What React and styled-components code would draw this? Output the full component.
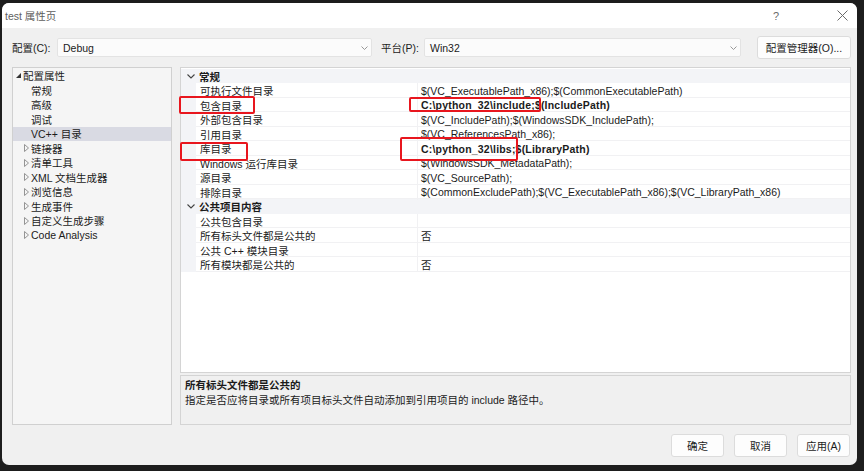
import styled, { createGlobalStyle } from 'styled-components'

const treeItems = [
	{ label: '配置属性', level: 0, twisty: 'open' },
	{ label: '常规', level: 1 },
	{ label: '高级', level: 1 },
	{ label: '调试', level: 1 },
	{ label: 'VC++ 目录', level: 1, selected: true },
	{ label: '链接器', level: 1, twisty: 'closed' },
	{ label: '清单工具', level: 1, twisty: 'closed' },
	{ label: 'XML 文档生成器', level: 1, twisty: 'closed' },
	{ label: '浏览信息', level: 1, twisty: 'closed' },
	{ label: '生成事件', level: 1, twisty: 'closed' },
	{ label: '自定义生成步骤', level: 1, twisty: 'closed' },
	{ label: 'Code Analysis', level: 1, twisty: 'closed' },
]

const sections = [
	{
		title: '常规',
		rows: [
			['可执行文件目录', '$(VC_ExecutablePath_x86);$(CommonExecutablePath)'],
			['包含目录', 'C:\\python_32\\include;$(IncludePath)', true],
			['外部包含目录', '$(VC_IncludePath);$(WindowsSDK_IncludePath);'],
			['引用目录', '$(VC_ReferencesPath_x86);'],
			['库目录', 'C:\\python_32\\libs;$(LibraryPath)', true],
			['Windows 运行库目录', '$(WindowsSDK_MetadataPath);'],
			['源目录', '$(VC_SourcePath);'],
			['排除目录', '$(CommonExcludePath);$(VC_ExecutablePath_x86);$(VC_LibraryPath_x86)'],
		],
	},
	{
		title: '公共项目内容',
		rows: [
			['公共包含目录', ''],
			['所有标头文件都是公共的', '否'],
			['公共 C++ 模块目录', ''],
			['所有模块都是公共的', '否'],
		],
	},
]

// highlight marks drawn over the grid (relative to the grid frame)
const marks = [
	{ left: -2, top: 28, width: 76, height: 18 },
	{ left: 228, top: 29, width: 132, height: 15 },
	{ left: -1, top: 74, width: 68, height: 19 },
	{ left: 219, top: 69, width: 118, height: 24 },
]

const App = () => {
	return (
		<>
			<GlobalStyle />
			<Screen>
				<Dialog>
					<TitleBar>
						<Title>test 属性页</Title>
						<TitleButtons>
							<HelpGlyph>?</HelpGlyph>
							<svg width='11' height='11' viewBox='0 0 11 11'>
								<path d='M0.5 0.5 L10.5 10.5 M10.5 0.5 L0.5 10.5' stroke='#6a6a6a' strokeWidth='1' />
							</svg>
						</TitleButtons>
					</TitleBar>
					<Body>
						<TopRow>
							<FieldLabel $w={45}>配置(C):</FieldLabel>
							<Combo $w={315}>
								Debug
								<Chevron />
							</Combo>
							<FieldLabel $w={43} $ml={9}>平台(P):</FieldLabel>
							<Combo $w={317}>
								Win32
								<Chevron />
							</Combo>
							<PushButton $w={94} $ml='auto'>配置管理器(O)...</PushButton>
						</TopRow>
						<Main>
							<TreePanel>
								{treeItems.map(item => (
									<TreeRow key={item.label} $level={item.level} $selected={item.selected}>
										<Twisty>
											{item.twisty === 'open' && (
												<svg width='5' height='5' viewBox='0 0 5 5'>
													<path d='M5 0 L5 5 L0 5 Z' fill='#333' />
												</svg>
											)}
											{item.twisty === 'closed' && (
												<svg width='5' height='8' viewBox='0 0 5 8'>
													<path d='M0.5 0.5 L4.5 4 L0.5 7.5 Z' fill='none' stroke='#8a8a8a' strokeWidth='0.9' />
												</svg>
											)}
										</Twisty>
										{item.label}
									</TreeRow>
								))}
							</TreePanel>
							<RightColumn>
								<GridFrame>
									{sections.map(section => (
										<div key={section.title}>
											<HeaderRow>
												<Gutter>
													<svg width='8' height='5' viewBox='0 0 8 5'>
														<path d='M0.5 0.5 L4 4 L7.5 0.5' fill='none' stroke='#444' strokeWidth='1.1' />
													</svg>
												</Gutter>
												<HeaderText>{section.title}</HeaderText>
											</HeaderRow>
											{section.rows.map(([name, value, bold]) => (
												<PropRow key={name}>
													<Gutter />
													<PropName>{name}</PropName>
													<PropValue $bold={bold}>{value}</PropValue>
												</PropRow>
											))}
										</div>
									))}
									{marks.map((m, i) => (
										<Mark
											key={i}
											style={{ left: m.left, top: m.top, width: m.width, height: m.height }}
										/>
									))}
								</GridFrame>
								<DescBox>
									<DescTitle>所有标头文件都是公共的</DescTitle>
									<div>指定是否应将目录或所有项目标头文件自动添加到引用项目的 include 路径中。</div>
								</DescBox>
							</RightColumn>
						</Main>
						<Footer>
							<PushButton $w={53}>确定</PushButton>
							<PushButton $w={53}>取消</PushButton>
							<PushButton $w={53}>应用(A)</PushButton>
						</Footer>
					</Body>
				</Dialog>
			</Screen>
		</>
	)
}

const Chevron = () => (
	<ChevronBox>
		<svg width='7' height='4' viewBox='0 0 7 4'>
			<path d='M0.5 0.5 L3.5 3.5 L6.5 0.5' fill='none' stroke='#8c8c8c' strokeWidth='0.9' />
		</svg>
	</ChevronBox>
)

const GlobalStyle = createGlobalStyle`
	html, body {
		margin: 0;
		padding: 0;
		background: #1d1d1d;
	}
	body {
		font-family: "Liberation Sans", "Noto Sans CJK SC", sans-serif;
		font-size: 10.5px;
		color: #1b1b1b;
	}
`

const Screen = styled.div`
	width: 864px;
	height: 471px;
	box-sizing: border-box;
	padding: 3px 7px 6px 2px;
	background: #1d1d1d;
`

const Dialog = styled.div`
	height: 100%;
	display: flex;
	flex-direction: column;
	background: #f0f0f0;
	border-radius: 7px;
	overflow: hidden;
`

const TitleBar = styled.div`
	height: 25px;
	flex-shrink: 0;
	display: flex;
	align-items: center;
	justify-content: space-between;
	background: #ffffff;
	padding: 0 9px 0 3px;
`

const Title = styled.span`
	color: #5e5e5e;
	font-size: 10.5px;
`

const TitleButtons = styled.div`
	display: flex;
	align-items: center;
	gap: 58px;
`

const HelpGlyph = styled.span`
	color: #6a6a6a;
	font-size: 11px;
`

const Body = styled.div`
	flex: 1;
	display: flex;
	flex-direction: column;
	padding: 0 6px 0 10px;
`

const TopRow = styled.div`
	display: flex;
	align-items: center;
	height: 23px;
	margin-top: 8px;
`

const FieldLabel = styled.span`
	width: ${props => props.$w}px;
	margin-left: ${props => props.$ml || 0}px;
	flex-shrink: 0;
`

const Combo = styled.div`
	width: ${props => props.$w}px;
	height: 19px;
	box-sizing: border-box;
	display: flex;
	align-items: center;
	padding-left: 5px;
	background: #fbfbfb;
	border: 1px solid #e3e3e3;
	border-radius: 2px;
`

const ChevronBox = styled.span`
	margin-left: auto;
	margin-right: 3px;
	display: flex;
	align-items: center;
`

const PushButton = styled.div`
	width: ${props => props.$w}px;
	height: 23px;
	margin-left: ${props => props.$ml || 0};
	box-sizing: border-box;
	display: flex;
	align-items: center;
	justify-content: center;
	background: #fdfdfd;
	border: 1px solid #dcdcdc;
	border-radius: 3px;
	flex-shrink: 0;
`

const Main = styled.div`
	display: flex;
	gap: 8px;
	height: 358px;
	margin-top: 8px;
`

const TreePanel = styled.div`
	width: 160px;
	box-sizing: border-box;
	background: #f5f5f5;
	border: 1px solid #d0d0d0;
	padding-top: 0.5px;
`

const TreeRow = styled.div`
	height: 14.5px;
	display: flex;
	align-items: center;
	padding-left: ${props => (props.$level ? 11 : 3)}px;
	background: ${props => (props.$selected ? '#d9dae3' : 'transparent')};
	white-space: nowrap;
`

const Twisty = styled.span`
	width: 7px;
	display: flex;
	align-items: center;
	flex-shrink: 0;
`

const RightColumn = styled.div`
	flex: 1;
	display: flex;
	flex-direction: column;
	gap: 2px;
`

const GridFrame = styled.div`
	height: 306px;
	box-sizing: border-box;
	background: #ffffff;
	border: 1px solid #d4d4d4;
	position: relative;
	padding-top: 0.5px;
`

const rowBase = `
	height: 14.5px;
	box-sizing: border-box;
	display: grid;
	grid-template-columns: 15px 222px 1fr;
	align-items: stretch;
	white-space: nowrap;
`

const HeaderRow = styled.div`
	${rowBase}
	background: #f3f4f7;
`

const PropRow = styled.div`
	${rowBase}
	border-bottom: 1px solid #f1f1f3;
`

const Gutter = styled.span`
	display: flex;
	align-items: center;
	justify-content: center;
	padding-left: 4px;
	background: #f3f4f7;
`

const HeaderText = styled.span`
	grid-column: 2 / 4;
	display: flex;
	align-items: center;
	padding-left: 3px;
	font-weight: bold;
`

const PropName = styled.span`
	display: flex;
	align-items: center;
	padding-left: 4px;
	border-right: 1px solid #f1f1f3;
`

const PropValue = styled.span`
	display: flex;
	align-items: center;
	padding-left: 3px;
	font-weight: ${props => (props.$bold ? 'bold' : 'normal')};
	letter-spacing: ${props => (props.$bold ? '0.2px' : '0')};
	overflow: hidden;
`

const Mark = styled.div`
	position: absolute;
	box-sizing: border-box;
	border: 2px solid #e8161e;
	border-radius: 2px;
	pointer-events: none;
`

const DescBox = styled.div`
	flex: 1;
	box-sizing: border-box;
	background: #f0f0f0;
	border: 1px solid #d4d4d4;
	padding: 2px 4px;
	line-height: 15px;
`

const DescTitle = styled.div`
	font-weight: bold;
`

const Footer = styled.div`
	display: flex;
	justify-content: flex-end;
	gap: 10px;
	margin-top: 9px;
	padding-right: 1px;
`

export default App
